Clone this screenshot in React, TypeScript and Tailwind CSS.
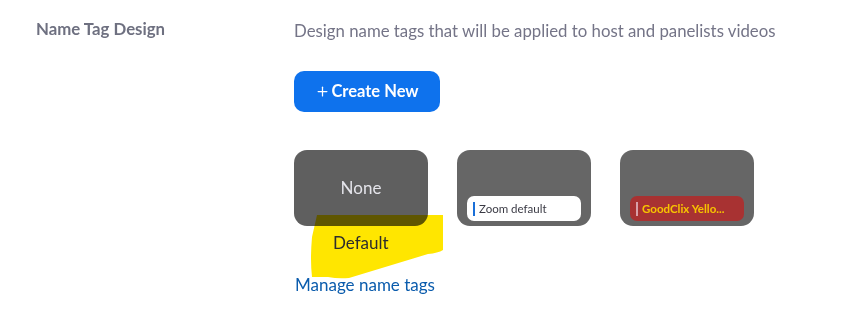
import { Plus } from "lucide-react";

const tags = [
  { kind: "none" },
  { kind: "zoom", label: "Zoom default" },
  { kind: "goodclix", label: "GoodClix Yello..." },
];

function TagCard({ kind, label }: { kind: string; label?: string }) {
  if (kind === "none") {
    return (
      <div className="w-[134px] h-[76px] rounded-[13px] bg-[#5f5f5f] flex items-center justify-center">
        <span className="text-[17px] text-[#e4e4ea]">None</span>
      </div>
    );
  }
  const red = kind === "goodclix";
  return (
    <div className="w-[134px] h-[76px] rounded-[13px] bg-[#666666] flex flex-col justify-end px-[10px] pb-[5px]">
      <div className={`h-[25px] rounded-[7px] flex items-center gap-[4px] pl-[6px] ${red ? "bg-[#a83232]" : "bg-white"}`}>
        <span className={`w-[2px] h-[14px] ${red ? "bg-[#d8a0a8]" : "bg-[#1a6fd8]"}`} />
        <span className={`text-[11.5px] leading-none ${red ? "text-[#f7c400] font-bold" : "text-[#3a3a44]"}`}>{label}</span>
      </div>
    </div>
  );
}

export default function App() {
  return (
    <div className="w-[843px] h-[323px] bg-white overflow-hidden" style={{ fontFamily: "Lato, 'Open Sans', sans-serif" }}>
      <div className="flex pt-[19px]">
        <div className="w-[294px] shrink-0 pl-[36px]">
          <h3 className="text-[16.8px] leading-[20px] font-bold text-[#6e7080]">Name Tag Design</h3>
        </div>
        <div className="flex flex-col items-start">
          <p className="text-[16.8px] leading-[24px] text-[#747487]">Design name tags that will be applied to host and panelists videos</p>
          <button className="mt-[28px] w-[146px] h-[41px] rounded-[10px] bg-[#0e72ed] text-white text-[16.5px] font-bold flex items-center justify-center gap-[1px]">
            <Plus className="w-[15px] h-[15px]" strokeWidth={2} />
            Create New
          </button>
          <div className="relative mt-[38px]">
            <div className="flex gap-[29px]">
              {tags.map((t, i) => (
                <TagCard key={i} kind={t.kind} label={t.label} />
              ))}
            </div>
            <svg className="absolute left-[16px] top-[65px] mix-blend-multiply pointer-events-none" width="134" height="66" viewBox="0 0 134 66">
              <path d="M7 0 L133 0 L133 35 Q128 38 118 39 L39 63 Q28 64 18 62 L2 62 Q0 45 2 22 Z" fill="#ffe600" />
            </svg>
            <div className="relative pl-[39px] pt-[5px] text-[17px] leading-[24px] text-[#2d2d2d]">Default</div>
          </div>
          <a className="mt-[18px] ml-[1px] text-[17px] leading-[24px] text-[#0b5cad]">Manage name tags</a>
        </div>
      </div>
    </div>
  );
}
